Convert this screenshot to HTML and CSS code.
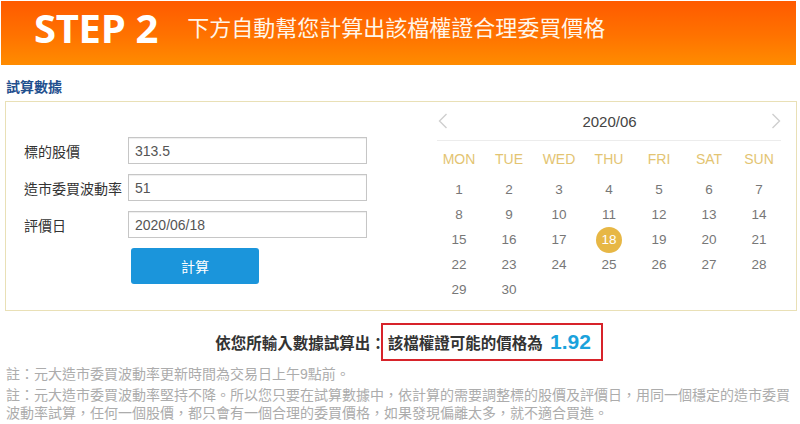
FILE: index.html
```html
<!DOCTYPE html>
<html lang="zh-TW">
<head>
<meta charset="utf-8">
<title>STEP 2</title>
<link rel="stylesheet" href="styles.css">
</head>
<body>
<header class="banner">
  <span class="step">STEP 2</span>
  <span class="banner-title">下方自動幫您計算出該檔權證合理委買價格</span>
</header>

<h2 class="section-title">試算數據</h2>

<section class="panel">
  <div class="form">
    <div class="form-row">
      <label class="label">標的股價</label>
      <input class="input" type="text" value="313.5" readonly>
    </div>
    <div class="form-row">
      <label class="label">造市委買波動率</label>
      <input class="input" type="text" value="51" readonly>
    </div>
    <div class="form-row">
      <label class="label">評價日</label>
      <input class="input" type="text" value="2020/06/18" readonly>
    </div>
    <button class="btn" type="button">計算</button>
  </div>

  <div class="calendar">
    <div class="cal-head">
      <svg class="arrow" width="10" height="16" viewBox="0 0 10 16"><path d="M8.5 1 L1.5 8 L8.5 15" fill="none" stroke="#cfcfcf" stroke-width="1.4"/></svg>
      <span class="cal-title">2020/06</span>
      <svg class="arrow" width="10" height="16" viewBox="0 0 10 16"><path d="M1.5 1 L8.5 8 L1.5 15" fill="none" stroke="#cfcfcf" stroke-width="1.4"/></svg>
    </div>
    <div class="cal-week">
      <span>MON</span><span>TUE</span><span>WED</span><span>THU</span><span>FRI</span><span>SAT</span><span>SUN</span>
    </div>
    <div class="cal-days">
      <span>1</span><span>2</span><span>3</span><span>4</span><span>5</span><span>6</span><span>7</span>
      <span>8</span><span>9</span><span>10</span><span>11</span><span>12</span><span>13</span><span>14</span>
      <span>15</span><span>16</span><span>17</span><span><b class="selected">18</b></span><span>19</span><span>20</span><span>21</span>
      <span>22</span><span>23</span><span>24</span><span>25</span><span>26</span><span>27</span><span>28</span>
      <span>29</span><span>30</span>
    </div>
  </div>
</section>

<div class="result">
  <span class="result-lead">依您所輸入數據試算出：</span>
  <span class="result-box">該檔權證可能的價格為 <strong class="price">1.92</strong></span>
</div>

<div class="notes">
  <p>註：元大造市委買波動率更新時間為交易日上午9點前。</p>
  <p>註：元大造市委買波動率堅持不降。所以您只要在試算數據中，依計算的需要調整標的股價及評價日，用同一個穩定的造市委買波動率試算，任何一個股價，都只會有一個合理的委買價格，如果發現偏離太多，就不適合買進。</p>
</div>
</body>
</html>
```

FILE: styles.css
```css
* { box-sizing: border-box; }

body {
  margin: 0;
  background: #fff;
  font-family: "Liberation Sans", "Noto Sans CJK TC", Arial, sans-serif;
  color: #333;
}

.banner {
  margin: 1px 4px 0 1px;
  height: 64px;
  background: linear-gradient(to bottom, #ff5a00 0%, #ff7300 55%, #ff8c00 100%);
  display: flex;
  align-items: center;
  padding: 0 0 10px 33px;
  color: #fff;
}

.step {
  font-family: "Open Sans", "Liberation Sans", sans-serif;
  font-weight: 700;
  font-size: 40px;
  line-height: 1;
  letter-spacing: -0.3px;
}

.banner-title {
  margin-left: 29px;
  margin-bottom: 4px;
  font-family: "Noto Sans CJK TC", sans-serif;
  font-size: 22px;
  line-height: 1;
  color: #fff6ea;
}

.section-title {
  margin: 13px 0 7px 6px;
  font-size: 14px;
  line-height: 16px;
  font-weight: 700;
  color: #1f4f8e;
  font-family: "Noto Sans CJK TC", sans-serif;
}

.panel {
  display: flex;
  margin: 0 3px 0 5px;
  height: 210px;
  border: 1px solid #e9e0b6;
}

.form {
  padding: 35px 0 0 18px;
  width: 361px;
  flex: none;
}

.form-row {
  display: flex;
  align-items: center;
  height: 27px;
  margin-bottom: 10px;
}

.label {
  width: 104px;
  font-size: 14px;
  color: #333;
  font-family: "Noto Sans CJK TC", sans-serif;
}

.input {
  width: 239px;
  height: 27px;
  padding: 0 6px;
  border: 1px solid #c6c6c6;
  box-shadow: inset 0 1px 1px rgba(0,0,0,0.07);
  font-family: "Liberation Sans", Arial, sans-serif;
  font-size: 14px;
  color: #555;
  background: #fff;
  outline: none;
}

.btn {
  display: block;
  margin: 8px 0 0 107px;
  width: 128px;
  height: 36px;
  border: none;
  border-radius: 3px;
  background: #1b95db;
  color: #fff;
  font-family: "Noto Sans CJK TC", sans-serif;
  font-size: 14px;
}

.calendar {
  margin-left: 67px;
  width: 350px;
  flex: none;
}

.cal-head {
  height: 39px;
  margin: 0 3px;
  display: flex;
  align-items: center;
  justify-content: space-between;
  border-bottom: 1px solid #ececec;
  padding: 0 0 0 1px;
}

.cal-title {
  font-size: 15px;
  color: #444;
}

.arrow { display: block; }

.cal-week,
.cal-days {
  display: grid;
  grid-template-columns: repeat(7, 50px);
}

.cal-week span {
  height: 36px;
  display: flex;
  align-items: center;
  justify-content: center;
  font-size: 14px;
  color: #e3c472;
}

.cal-days span {
  height: 25px;
  display: flex;
  align-items: center;
  justify-content: center;
  font-size: 13.5px;
  color: #777;
}

.selected {
  width: 26px;
  height: 26px;
  border-radius: 50%;
  background: #e7b745;
  color: #fff;
  font-weight: 400;
  display: flex;
  align-items: center;
  justify-content: center;
}

.result {
  margin-top: 12px;
  display: flex;
  align-items: center;
  justify-content: center;
  padding-left: 18px;
  font-family: "Liberation Sans", "Noto Sans CJK TC", sans-serif;
}

.result-lead {
  font-size: 15.5px;
  font-weight: 700;
  color: #333;
}

.result-box {
  margin-left: -5px;
  height: 38px;
  border: 2px solid #d7232a;
  padding: 0 10px 0 5px;
  display: flex;
  align-items: center;
  font-size: 15.5px;
  font-weight: 700;
  color: #333;
  white-space: pre;
}

.price {
  font-size: 21px;
  color: #1ba2dc;
  margin-left: 3px;
}

.notes {
  margin: 4px 3px 0 6px;
  font-family: "Liberation Sans", "Noto Sans CJK TC", sans-serif;
  font-size: 14px;
  line-height: 18px;
  color: #acacac;
}

.notes p { margin: 0 0 3px; }
```
